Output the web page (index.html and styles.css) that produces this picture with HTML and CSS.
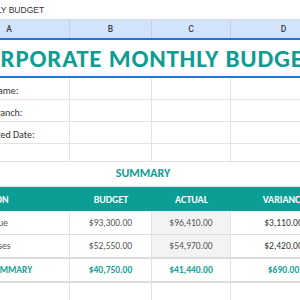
FILE: index.html
```html
<!DOCTYPE html>
<html>
<head>
<meta charset="utf-8">
<link rel="stylesheet" href="styles.css">
</head>
<body>
<div class="formula"><span class="ftext">CORPORATE MONTHLY BUDGET</span></div>
<div class="sheet">
  <div class="row colhead">
    <div class="ch">A</div><div class="ch">B</div><div class="ch">C</div><div class="ch">D</div>
  </div>
  <div class="title-row"><div class="title">CORPORATE MONTHLY BUDGET</div></div>
  <div class="row info">
    <div class="cell label">Company Name:</div><div class="cell"></div><div class="cell"></div><div class="cell"></div>
  </div>
  <div class="row info">
    <div class="cell label">Company Branch:</div><div class="cell"></div><div class="cell"></div><div class="cell"></div>
  </div>
  <div class="row info">
    <div class="cell label label-date">Report Created Date:</div><div class="cell"></div><div class="cell"></div><div class="cell"></div>
  </div>
  <div class="row blank">
    <div class="cell"></div><div class="cell"></div><div class="cell"></div><div class="cell"></div>
  </div>
  <div class="sum-title">SUMMARY</div>
  <div class="row thead">
    <div class="th left">DESCRIPTION</div><div class="th">BUDGET</div><div class="th">ACTUAL</div><div class="th">VARIANCE</div>
  </div>
  <div class="row data">
    <div class="cell dl">Total Revenue</div><div class="cell num">$93,300.00</div><div class="cell num shade">$96,410.00</div><div class="cell num dark">$3,110.00</div>
  </div>
  <div class="row data before-total">
    <div class="cell dl">Total Expenses</div><div class="cell num">$52,550.00</div><div class="cell num shade">$54,970.00</div><div class="cell num dark">$2,420.00</div>
  </div>
  <div class="row data total">
    <div class="cell dl">BUDGET SUMMARY</div><div class="cell num">$40,750.00</div><div class="cell num">$41,440.00</div><div class="cell num">$690.00</div>
  </div>
  <div class="row tail">
    <div class="cell"></div><div class="cell"></div><div class="cell"></div><div class="cell"></div>
  </div>
</div>
</body>
</html>
```
FILE: styles.css
```css
* { box-sizing: border-box; }
html, body { margin: 0; padding: 0; }
body {
  width: 300px;
  height: 300px;
  overflow: hidden;
  background: #ffffff;
  font-family: Carlito, Calibri, Lato, "Open Sans", sans-serif;
}
.formula {
  height: 20px;
  border-bottom: 1px solid #d6d9dd;
  display: flex;
  align-items: center;
  overflow: hidden;
  white-space: nowrap;
}
.ftext {
  margin-left: -90px;
  font-family: "Liberation Sans", Arial, sans-serif;
  font-size: 8.5px;
  color: #333;
}
.sheet {
  margin-left: -51px;
  width: 388px;
}
.row {
  display: grid;
  grid-template-columns: 121px 82px 79px 106px;
}
.colhead { height: 18px; background: #d3e3fd; }
.ch {
  display: flex;
  align-items: center;
  justify-content: center;
  border-right: 1px solid #c4cfe0;
  font-family: Roboto, "Liberation Sans", sans-serif;
  font-size: 8.5px;
  font-weight: 500;
  color: #3c4043;
}
.title-row {
  height: 40px;
  border-top: 2px solid #1a73e8;
  border-bottom: 2px solid #1a73e8;
  display: flex;
  align-items: center;
  justify-content: center;
  overflow: hidden;
  white-space: nowrap;
}
.title {
  font-size: 25px;
  letter-spacing: 0.8px;
  font-weight: 700;
  color: #0e9c93;
}
.cell {
  border-right: 1px solid #e3e3e3;
  border-bottom: 1px solid #e3e3e3;
  white-space: nowrap;
  overflow: hidden;
}
.info { height: 22px; }
.info .cell { display: flex; align-items: flex-end; padding-bottom: 2px; }
.label { padding-left: 2px; font-size: 10px; color: #333; }
.label-date { text-indent: -2px; }
.blank { height: 18px; }
.sum-title {
  height: 25px;
  display: flex;
  align-items: flex-end;
  justify-content: center;
  padding-bottom: 6px;
  font-size: 12px;
  font-weight: 700;
  color: #0e9c93;
  border-bottom: 1px solid #e3e3e3;
}
.thead { height: 24px; background: #0a9e95; }
.th {
  display: flex;
  align-items: center;
  justify-content: center;
  color: #ffffff;
  font-size: 10px;
  font-weight: 700;
  white-space: nowrap;
}
.th.left { justify-content: flex-start; padding-left: 4px; }
.data { height: 24px; }
.data:first-of-type { height: 23px; }
.data .cell {
  display: flex;
  align-items: center;
  font-size: 9.5px;
  color: #555;
  border-bottom-color: #dedede;
}
.dl { padding-left: 5px; }
.num { justify-content: center; }
.shade { background: #f3f3f3; }
.dark { color: #333 !important; }
.before-total .cell { border-bottom: 2px solid #dcdcdc; }
.total .cell {
  font-weight: 700;
  color: #17a299;
  border-bottom: 2px solid #dcdcdc;
}
.total .dl { color: #17a299; }
.tail { height: 24px; }
```
